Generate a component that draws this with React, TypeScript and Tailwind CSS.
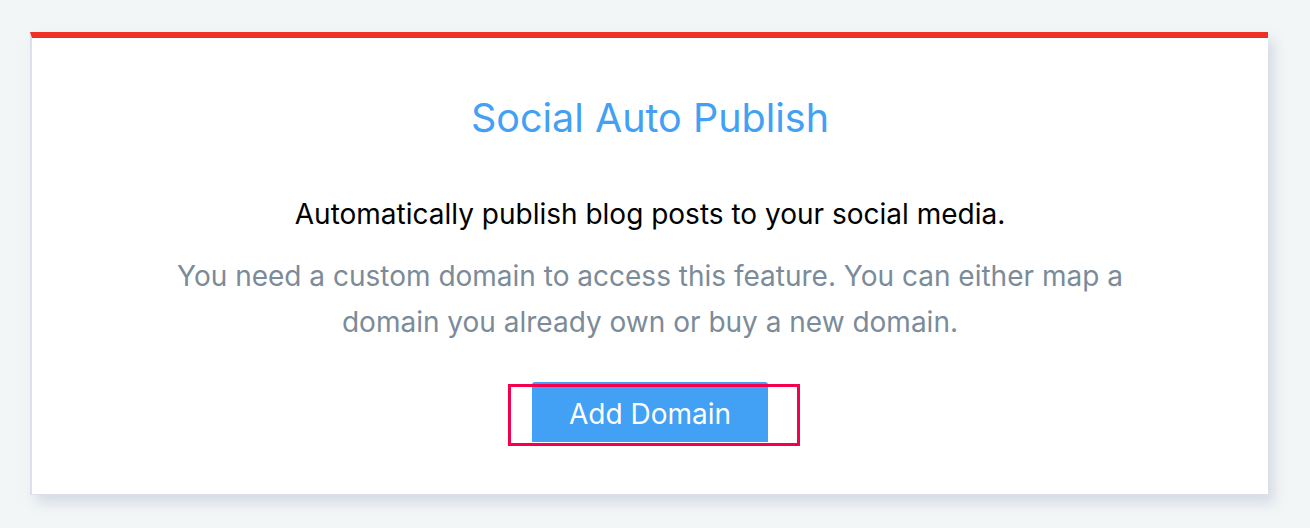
export default function App() {
  return (
    <div
      className="min-h-[528px] w-full bg-[#f3f6f7] pt-8 pl-[30px] pr-[42px]"
      style={{ fontFamily: "Inter, 'Noto Sans', sans-serif" }}
    >
      <div className="border-t-[6px] border-t-[#ee3124] border-l-2 border-l-[#dde0e8] border-b border-b-[#dde0e8] bg-white shadow-[6px_8px_12px_rgba(200,206,220,0.7)]">
        <div className="flex flex-col items-center pt-[56px] pb-[52px]">
          <h1 className="text-[39.5px] leading-[48px] text-[#42a0f5]">Social Auto Publish</h1>
          <p className="mt-[55px] text-[28px] leading-[34px] text-black">
            Automatically publish blog posts to your social media.
          </p>
          <p className="mt-[22px] max-w-[990px] text-center text-[28px] leading-[46px] text-[#7b8b99]">
            You need a custom domain to access this feature. You can either map a domain you already own or buy a new
            domain.
          </p>
          <div className="relative mt-[37px]">
            <button className="h-[60px] w-[236px] rounded-t-[3px] bg-[#42a0f5] pt-1 text-[28px] text-white">
              Add Domain
            </button>
            <div className="pointer-events-none absolute top-[2px] left-[-24px] h-[62px] w-[292px] border-[3px] border-[#f5004f]" />
          </div>
        </div>
      </div>
    </div>
  );
}
